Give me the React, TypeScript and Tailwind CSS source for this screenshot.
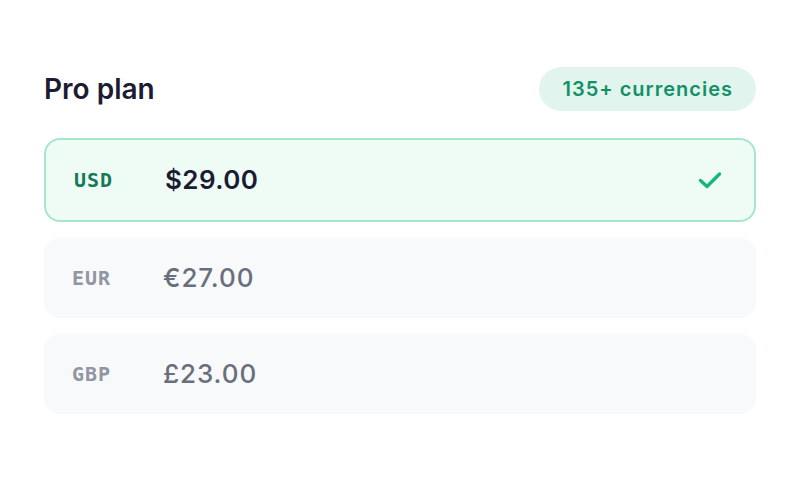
import React from 'react';

type Row = { code: string; price: string; active?: boolean };

const rows: Row[] = [
  { code: 'USD', price: '$29.00', active: true },
  { code: 'EUR', price: '€27.00' },
  { code: 'GBP', price: '£23.00' },
];

const Check = () => (
  <svg width="28" height="28" viewBox="0 0 28 28" fill="none" className="shrink-0">
    <path d="M3.5 14.5 10 20.5 22.5 8" stroke="#14b77a" strokeWidth="3.4" strokeLinecap="round" strokeLinejoin="round" />
  </svg>
);

export default function App() {
  return (
    <div className="w-[800px] h-[480px] bg-white flex flex-col justify-center px-[44px] font-['Inter',sans-serif]">
      {/* header */}
      <div className="flex items-center justify-between h-[44px] mb-[27px]">
        <h1 className="text-[28px] font-semibold text-[#1b1c33]">Pro plan</h1>
        <span className="h-[44px] flex items-center px-[23px] rounded-full bg-[#e1f5ee] text-[#149066] text-[20px] font-semibold tracking-[0.05em]">
          135+ currencies
        </span>
      </div>

      <div className="flex flex-col gap-4">
        {rows.map((r) => (
          <div
            key={r.code}
            className={
              r.active
                ? 'h-[84px] flex items-center pl-7 pr-[29px] rounded-2xl border-2 border-[#a8e6cc] bg-[#effcf6]'
                : 'h-[80px] flex items-center pl-7 pr-[29px] rounded-2xl bg-[#f8f9fb]'
            }
          >
            <span
              className={
                r.active
                  ? "w-[91px] text-[20px] font-bold tracking-[0.05em] font-['DejaVu_Sans_Mono',monospace] text-[#157a55]"
                  : "w-[91px] text-[20px] font-bold tracking-[0.05em] font-['DejaVu_Sans_Mono',monospace] text-[#9096a2]"
              }
            >
              {r.code}
            </span>
            <span
              className={
                r.active
                  ? 'flex-1 text-[26px] font-semibold tracking-[0.015em] text-[#1b1c33]'
                  : 'flex-1 text-[26px] font-medium tracking-[0.035em] text-[#686f7c]'
              }
            >
              {r.price}
            </span>
            {r.active && <Check />}
          </div>
        ))}
      </div>
    </div>
  );
}
